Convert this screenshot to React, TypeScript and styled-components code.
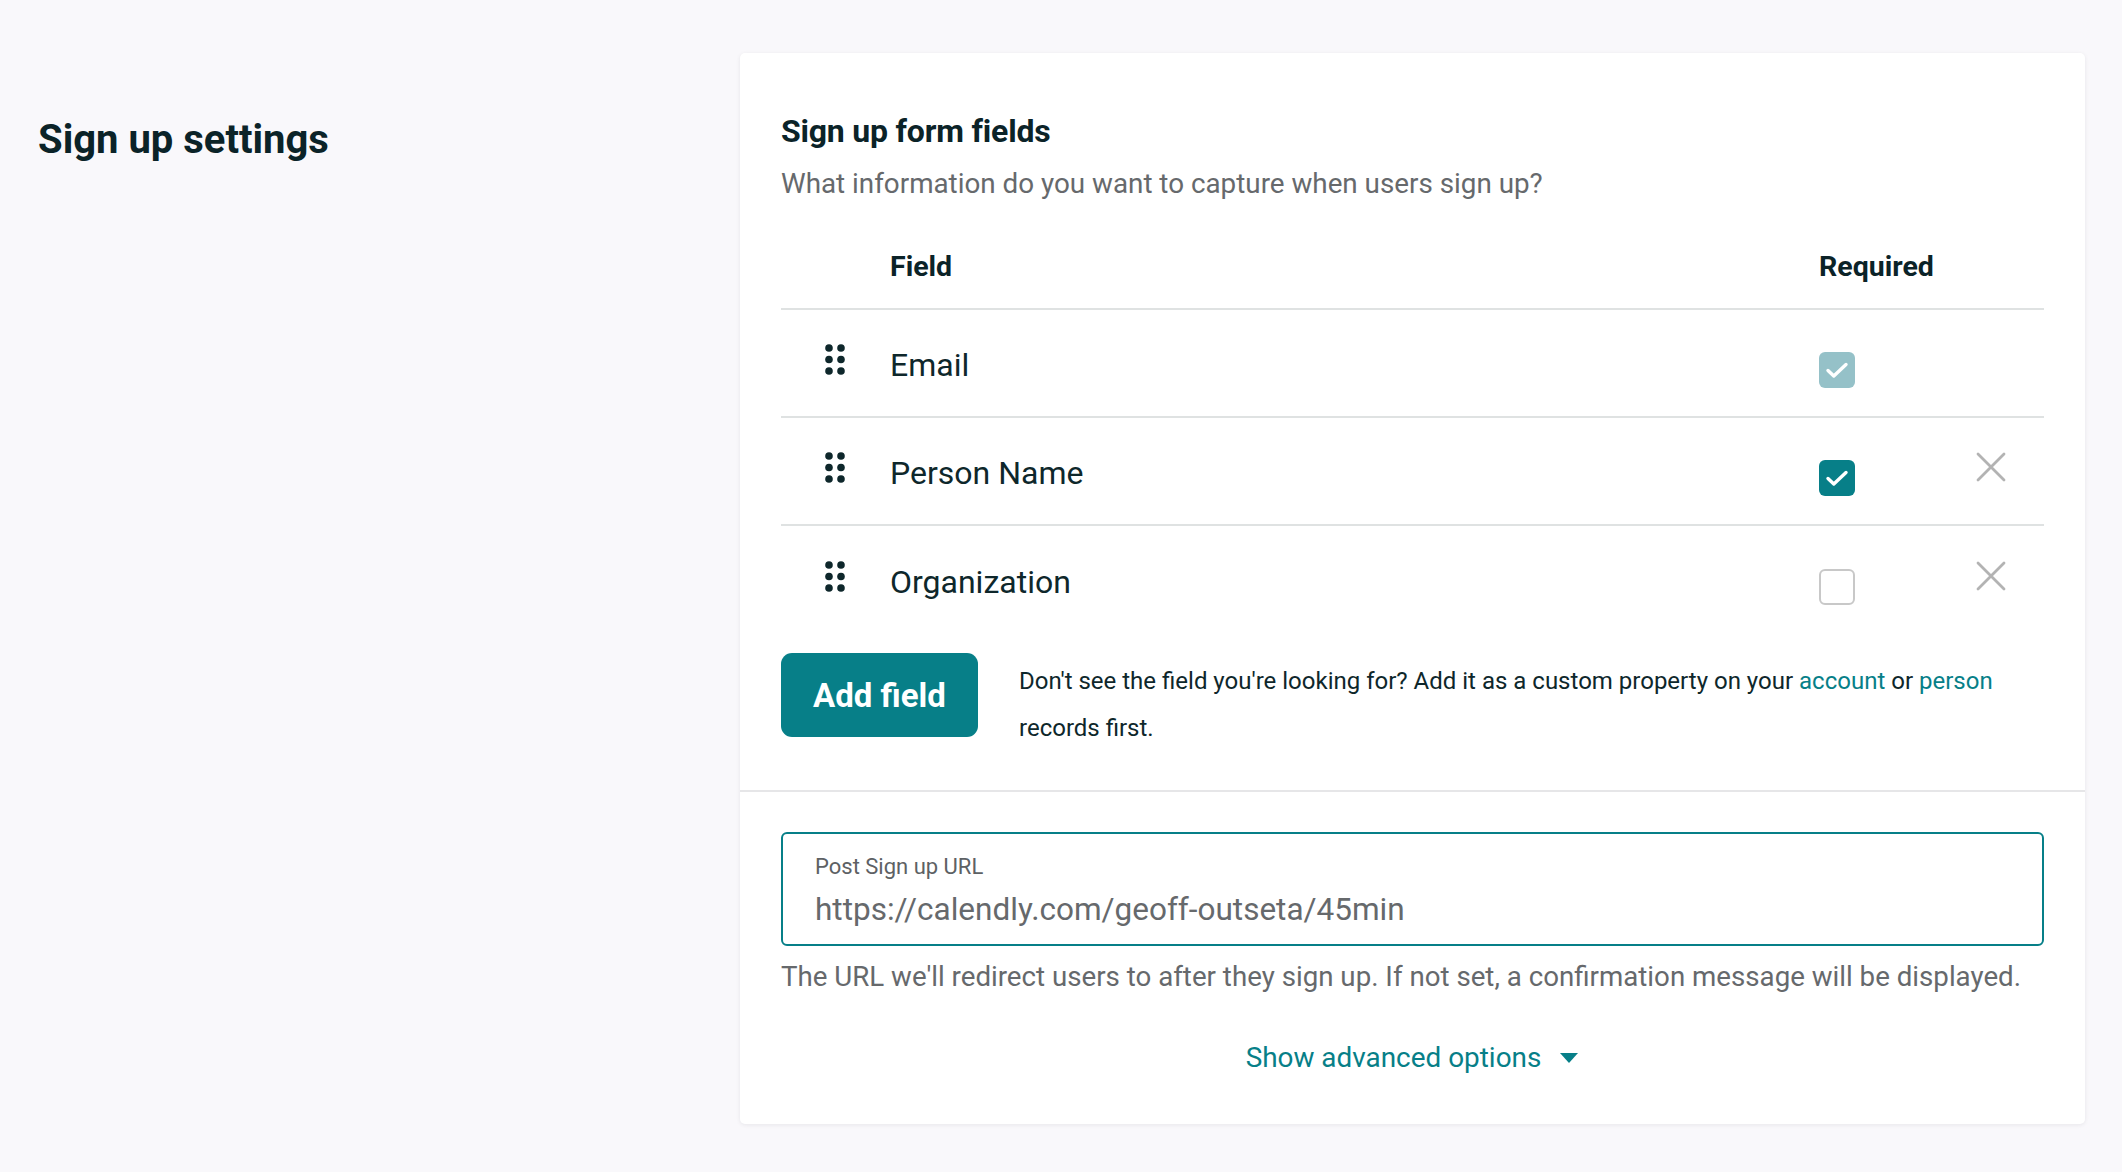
import React from 'react';
import styled, { createGlobalStyle } from 'styled-components';

const GlobalStyle = createGlobalStyle`
  * { box-sizing: border-box; }
  html, body {
    margin: 0;
    padding: 0;
    background: #f9f8fb;
    font-family: Roboto, "Liberation Sans", sans-serif;
    color: #0e272b;
  }
`;

const teal = '#077f88';

const Page = styled.div`
  display: flex;
  align-items: flex-start;
  min-height: 1172px;
  padding: 53px 37px 40px 38px;
`;

const Aside = styled.div`
  width: 702px;
  flex-shrink: 0;
  padding-top: 64px;
`;

const PageTitle = styled.h1`
  margin: 0;
  font-size: 40px;
  line-height: 46px;
  font-weight: 700;
  color: #0b2328;
`;

const Card = styled.section`
  flex: 1;
  background: #ffffff;
  border-radius: 5px;
  box-shadow: 0 1px 4px rgba(20, 20, 40, 0.08);
`;

const CardSection = styled.div<{ $divider?: boolean }>`
  padding: ${({ $divider }) => ($divider ? '40px 41px 48px' : '60px 41px 38px')};
  border-top: ${({ $divider }) => ($divider ? '2px solid #e6e6e8' : 'none')};
`;

const SectionTitle = styled.h2`
  margin: 0;
  font-size: 32px;
  line-height: 36px;
  font-weight: 700;
  letter-spacing: -0.2px;
  color: #0b2328;
`;

const SectionSubtitle = styled.p`
  margin: 17px 0 0;
  font-size: 27.8px;
  line-height: 36px;
  color: #66696c;
`;

const FieldGrid = styled.div<{ $header?: boolean; $last?: boolean }>`
  display: grid;
  grid-template-columns: 109px 1fr 157px 68px;
  align-items: center;
  min-height: ${({ $header }) => ($header ? 'auto' : '108px')};
  margin-top: ${({ $header }) => ($header ? '47px' : '0')};
  padding-bottom: ${({ $header }) => ($header ? '23px' : '0')};
  border-bottom: ${({ $last }) => ($last ? 'none' : '2px solid #dfe2e2')};
`;

const HeaderCell = styled.div`
  font-size: 28.5px;
  line-height: 36px;
  font-weight: 700;
  color: #0b2328;
`;

const HandleCell = styled.div`
  padding-left: 44px;
  display: flex;
  margin-top: -8px;
`;

const FieldName = styled.div`
  font-size: 32px;
  line-height: 40px;
  color: #0e272b;
  margin-top: 4px;
`;

const CheckCell = styled.div`
  display: flex;
  margin-top: 14px;
`;

const Box = styled.span<{ $state: 'locked' | 'on' | 'off' }>`
  width: 36px;
  height: 36px;
  border-radius: 6px;
  display: flex;
  align-items: center;
  justify-content: center;
  background: ${({ $state }) =>
    $state === 'locked' ? '#95c1c8' : $state === 'on' ? teal : '#ffffff'};
  border: ${({ $state }) => ($state === 'off' ? '2px solid #c8c8c8' : 'none')};
`;

const RemoveCell = styled.div`
  display: flex;
  margin-top: -8px;
`;

const Footer = styled.div`
  display: flex;
  align-items: flex-start;
  gap: 41px;
  margin-top: 19px;
`;

const AddButton = styled.button`
  flex-shrink: 0;
  width: 197px;
  height: 84px;
  border: none;
  border-radius: 11px;
  background: ${teal};
  color: #ffffff;
  font-family: inherit;
  font-size: 33px;
  font-weight: 700;
  cursor: pointer;
`;

const HelpText = styled.p`
  margin: 5px 0 0;
  font-size: 24px;
  line-height: 47px;
  color: #0e272b;
`;

const TextLink = styled.a`
  color: ${teal};
  text-decoration: none;
`;

const InputBox = styled.label`
  display: block;
  height: 114px;
  border: 2px solid ${teal};
  border-radius: 6px;
  padding: 20px 32px 16px;
`;

const InputLabel = styled.span`
  display: block;
  font-size: 22px;
  line-height: 26px;
  color: #5d6164;
`;

const InputValue = styled.input`
  display: block;
  width: 100%;
  margin-top: 12px;
  padding: 0;
  border: none;
  outline: none;
  background: transparent;
  font-family: inherit;
  font-size: 31.5px;
  line-height: 36px;
  height: 36px;
  color: #66696c;
`;

const Hint = styled.p`
  margin: 13px 0 0;
  font-size: 27.7px;
  line-height: 36px;
  color: #66696c;
`;

const AdvancedToggle = styled.button`
  display: flex;
  align-items: center;
  gap: 18px;
  margin: 45px auto 0;
  padding: 0;
  border: none;
  background: none;
  font-family: inherit;
  font-size: 27.9px;
  line-height: 36px;
  color: ${teal};
  cursor: pointer;
`;

const DragHandle = () => (
  <svg width="20" height="31" viewBox="0 0 20 31">
    {[4, 15.5, 27].map((cy) => (
      <g key={cy} fill="#0e272b">
        <circle cx="4" cy={cy} r="3.8" />
        <circle cx="16" cy={cy} r="3.8" />
      </g>
    ))}
  </svg>
);

const Check = () => (
  <svg width="26" height="26" viewBox="0 0 26 26">
    <path d="M4 13.5l5.8 5.5L22 7.5" fill="none" stroke="#fff" strokeWidth="3.4" strokeLinecap="round" strokeLinejoin="round" />
  </svg>
);

const Cross = () => (
  <svg width="30" height="30" viewBox="0 0 30 30">
    <path d="M2 2l26 26M28 2L2 28" stroke="#b3b3b3" strokeWidth="2.8" strokeLinecap="round" />
  </svg>
);

const Caret = () => (
  <svg width="20" height="12" viewBox="0 0 20 12">
    <path d="M1 1h18L10 11z" fill={teal} />
  </svg>
);

type Field = { name: string; state: 'locked' | 'on' | 'off'; removable: boolean };

const fields: Field[] = [
  { name: 'Email', state: 'locked', removable: false },
  { name: 'Person Name', state: 'on', removable: true },
  { name: 'Organization', state: 'off', removable: true },
];

const App: React.FC = () => {
  return (
    <>
      <GlobalStyle />
      <Page>
        <Aside>
          <PageTitle>Sign up settings</PageTitle>
        </Aside>

        <Card>
          <CardSection>
            <SectionTitle>Sign up form fields</SectionTitle>
            <SectionSubtitle>What information do you want to capture when users sign up?</SectionSubtitle>

            <FieldGrid $header>
              <span />
              <HeaderCell>Field</HeaderCell>
              <HeaderCell>Required</HeaderCell>
              <span />
            </FieldGrid>

            {fields.map((field, i) => (
              <FieldGrid key={field.name} $last={i === fields.length - 1}>
                <HandleCell>
                  <DragHandle />
                </HandleCell>
                <FieldName>{field.name}</FieldName>
                <CheckCell>
                  <Box $state={field.state}>{field.state !== 'off' && <Check />}</Box>
                </CheckCell>
                <RemoveCell>{field.removable && <Cross />}</RemoveCell>
              </FieldGrid>
            ))}

            <Footer>
              <AddButton>Add field</AddButton>
              <HelpText>
                Don't see the field you're looking for? Add it as a custom property on your{' '}
                <TextLink href="#">account</TextLink> or <TextLink href="#">person</TextLink> records first.
              </HelpText>
            </Footer>
          </CardSection>

          <CardSection $divider>
            <InputBox>
              <InputLabel>Post Sign up URL</InputLabel>
              <InputValue defaultValue="https://calendly.com/geoff-outseta/45min" />
            </InputBox>
            <Hint>
              The URL we'll redirect users to after they sign up. If not set, a confirmation message will be displayed.
            </Hint>
            <AdvancedToggle>
              Show advanced options
              <Caret />
            </AdvancedToggle>
          </CardSection>
        </Card>
      </Page>
    </>
  );
};

export default App;
